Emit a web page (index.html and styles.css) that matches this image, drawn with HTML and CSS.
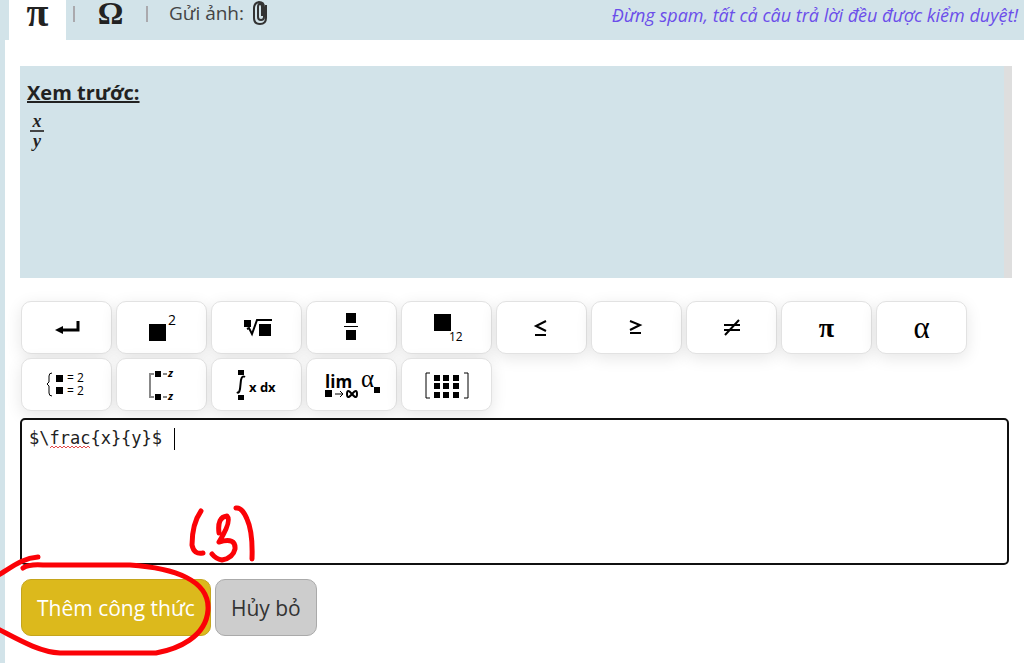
FILE: index.html
```html
<!DOCTYPE html>
<html lang="vi">
<head>
<meta charset="utf-8">
<title>Thêm công thức</title>
<link rel="stylesheet" href="styles.css">
</head>
<body>
<header class="topbar">
  <nav class="tabs">
    <button class="tab tab-active" type="button" aria-label="Công thức">π</button>
    <span class="divider"></span>
    <button class="tab" type="button" aria-label="Ký tự đặc biệt">Ω</button>
    <span class="divider"></span>
    <button class="attach" type="button">Gửi ảnh:
      <svg class="clip" viewBox="0 0 18 24" aria-hidden="true"><path d="M13 6v10q0 3-3 3t-3-3V6q0-3 2-3t2 3v9M15 4v13q0 6-6 6t-6-6V7q0-5 5-6 5 0 5 5"/></svg>
    </button>
  </nav>
  <p class="notice">Đừng spam, tất cả câu trả lời đều được kiểm duyệt!</p>
</header>
<main class="panel">
  <section class="preview">
    <h2 class="preview-title">Xem trước:</h2>
    <div class="fraction"><span class="numerator">x</span><span>y</span></div>
  </section>

  <div class="keys">
    <button class="key" type="button" aria-label="Xuống dòng"><svg viewBox="1 1 89 51"><path class="thick" d="M41 29H57V20"/><path d="M34 29l8-4v8z"/></svg></button>
    <button class="key" type="button" aria-label="Lũy thừa"><svg viewBox="1 1 89 51"><path d="M33 23h17v17H33z"/><text class="t14" x="52" y="24">2</text></svg></button>
    <button class="key" type="button" aria-label="Căn"><svg viewBox="1 1 89 51"><path d="M33 19h7v7h-7zM48 23h12v12H48z"/><path class="line" d="M36 28l2-1 3 6 5-14h15"/></svg></button>
    <button class="key" type="button" aria-label="Phân số"><svg viewBox="1 1 89 51"><path d="M40 12h10v10H40zM40 29h10v10H40zM38 25h14v1H38z"/></svg></button>
    <button class="key" type="button" aria-label="Chỉ số dưới"><svg viewBox="1 1 89 51"><path d="M33 13h17v17H33z"/><text class="t12" x="48" y="40">12</text></svg></button>
    <button class="key" type="button" aria-label="Nhỏ hơn hoặc bằng"><svg viewBox="1 1 89 51"><path class="line" d="M50 20l-10 5 10 5M39 34h11"/></svg></button>
    <button class="key" type="button" aria-label="Lớn hơn hoặc bằng"><svg viewBox="1 1 89 51"><path class="line" d="M39 20l10 4-10 5M39 32h11"/></svg></button>
    <button class="key" type="button" aria-label="Khác"><svg viewBox="1 1 89 51"><path class="line" d="M38 24h16M38 29h16M39 34l14-15"/></svg></button>
    <button class="key key-pi" type="button">π</button>
    <button class="key key-alpha" type="button">α</button>
    <button class="key" type="button" aria-label="Hệ phương trình"><svg viewBox="1 1 89 51"><path class="thin" d="M31 15q-3 0-3 3v6l-2 2 2 2v7q0 3 3 3"/><path d="M35 17h7v7h-7zM35 29h7v7h-7z"/><text class="t12" x="46" y="24">= 2</text><text class="t12" x="46" y="37">= 2</text></svg></button>
    <button class="key" type="button" aria-label="Hệ hoặc"><svg viewBox="1 1 89 51"><path class="gray" d="M38 16h-4v23h4"/><path d="M39 13h6v6h-6zM39 36h6v6h-6z"/><path class="gray" d="M47 16h4M47 39h4"/><text class="z" x="52" y="19">z</text><text class="z" x="52" y="42">z</text></svg></button>
    <button class="key" type="button" aria-label="Tích phân"><svg viewBox="1 1 89 51"><path d="M27 12h6v5h-6zM27 37h6v5h-6z"/><path class="integral" d="M34 19q-3-2-4 3l-1 9q-1 5-3 3"/><text class="bold12" x="38" y="34">x dx</text></svg></button>
    <button class="key" type="button" aria-label="Giới hạn"><svg viewBox="1 1 89 51"><text class="lim" x="19" y="30">lim</text><path d="M19 32h7v7h-7zM68 29h6v6h-6z"/><path class="thin" d="M29 36h8M34 33l3 3-3 3"/><path class="infinity" d="M46 36q-5-6-5 0t5 0q5-6 5 0t-5 0"/><text class="alpha" x="55" y="29">α</text></svg></button>
    <button class="key" type="button" aria-label="Ma trận"><svg viewBox="1 1 89 51"><path class="thin" d="M29 15h-4v25h4M63 15h4v25h-4"/><path d="M33 17h6v6h-6zM42 17h6v6h-6zM52 17h6v6h-6zM33 25h6v6h-6zM42 25h6v6h-6zM52 25h6v6h-6zM33 34h6v6h-6zM42 34h6v6h-6zM52 34h6v6h-6z"/></svg></button>
  </div>

  <div class="editor">
    <textarea class="source" aria-label="Mã công thức" spellcheck="false">$\frac{x}{y}$ </textarea>
    <svg class="spelling" viewBox="0 0 42 4" aria-hidden="true"><path d="M0 3l2-2 2 2 2-2 2 2 2-2 2 2 2-2 2 2 2-2 2 2 2-2 2 2 2-2 2 2 2-2 2 2 2-2 2 2 2-2 2 2"/></svg>
    <span class="caret"></span>
    <div class="actions">
      <button class="action action-add" type="button">Thêm công thức</button>
      <button class="action" type="button">Hủy bỏ</button>
    </div>
    <svg class="marks" viewBox="0 500 270 163" role="img" aria-label="(3)">
      <path d="M201 511C194 521 192 531 192 545Q194 555 203 553M219 533Q217 517 227 516Q232 521 219 542Q236 537 235 549Q233 558 222 560Q216 559 212 554M236 508Q242 507 247 519Q253 532 252 559"/>
      <path d="M38 557C22 558 12 567 -3 576M23 568Q29 564 43 565H130C174 568 210 580 208 610C206 637 178 649 156 653H60C38 652 14 637 -4 628"/>
    </svg>
  </div>
</main>
</body>
</html>
```
FILE: styles.css
```css
* { box-sizing: border-box; }
body {
  margin: 0;
  min-height: 100vh;
  display: flex;
  flex-direction: column;
  background: #d2e3e9;
  color: #222;
  font-family: "Open Sans", "Noto Sans", sans-serif;
  overflow-x: hidden;
}
button { font-family: inherit; color: inherit; padding: 0; cursor: pointer; }
.topbar {
  display: flex;
  justify-content: space-between;
  height: 40px;
  padding: 0 6px 0 9px;
}
.tabs { display: flex; align-items: flex-start; }
.tab {
  width: 57px;
  height: 40px;
  padding-bottom: 14px;
  border: 0;
  background: none;
  font: bold 32px/26px "Liberation Serif", serif;
}
.tab-active { background: #fff; font-size: 40px; }
.divider { width: 2px; height: 16px; margin: 6px 7px; background: #aaa9ad; }
.attach {
  display: flex;
  gap: 7px;
  margin-left: 14px;
  border: 0;
  background: none;
  color: #444;
  font-size: 19px;
  line-height: 26px;
}
.clip { width: 18px; height: 24px; margin-top: 1px; fill: none; stroke: #333; stroke-width: 2; }
.notice {
  margin: 0;
  color: #6b4eea;
  font-size: 18px;
  font-style: italic;
  line-height: 30px;
  white-space: nowrap;
}
.panel { flex: 1; margin-left: 5px; padding: 26px 12px 0 15px; background: #fff; }
.preview {
  height: 212px;
  padding: 12px 7px;
  border-right: 8px solid #dedede;
  background: #d2e3e9;
}
.preview-title {
  margin: 0;
  font-size: 20px;
  line-height: 30px;
  text-decoration: underline;
}
.fraction {
  display: inline-flex;
  flex-direction: column;
  align-items: center;
  width: 14px;
  margin: 4px 3px;
  font: italic bold 18px/18px "Liberation Serif", serif;
}
.numerator { width: 14px; height: 20px; border-bottom: 2px solid #444; text-align: center; }
.keys { display: flex; flex-wrap: wrap; gap: 4px; padding: 23px 0 7px 1px; }
.key {
  display: flex;
  align-items: center;
  justify-content: center;
  width: 91px;
  height: 53px;
  border: 1px solid #e2e2e2;
  border-radius: 10px;
  background: #fff;
  box-shadow: 0 4px 16px rgba(0, 0, 0, 0.1);
  color: #000;
}
.key svg { width: 89px; height: 51px; flex: none; }
.key-pi { font: bold 28px/28px "Liberation Serif", serif; }
.key-alpha { font: 31px/31px "Liberation Serif", serif; }
.line, .thick, .thin, .gray, .integral, .infinity { fill: none; stroke: #000; }
.line, .integral, .infinity { stroke-width: 2; }
.thick { stroke-width: 3; }
.gray { stroke: #888; stroke-width: 2; }
.t14 { font-size: 14px; }
.t12 { font-size: 12px; }
.z { font-size: 11px; font-weight: bold; font-style: italic; }
.bold12 { font-size: 13px; font-weight: bold; }
.lim { font-size: 17px; font-weight: bold; }
.alpha { font-family: "Liberation Serif", serif; font-size: 25px; }
.editor { position: relative; margin-right: 3px; }
.source {
  display: block;
  width: 100%;
  height: 147px;
  padding: 6px 7px;
  border: 2px solid #101010;
  border-radius: 5px;
  outline: 0;
  resize: none;
  background: #fff;
  color: #222;
  font: 17px/24px "DejaVu Sans Mono", monospace;
}
.spelling {
  position: absolute;
  left: 30px;
  top: 27px;
  width: 42px;
  height: 4px;
  fill: none;
  stroke: #e34b4b;
}
.caret { position: absolute; left: 154px; top: 10px; width: 1px; height: 22px; background: #000; }
.actions { display: flex; gap: 4px; padding: 14px 0 27px 1px; }
.action {
  height: 57px;
  padding: 0 15px;
  border: 1px solid #aaa;
  border-radius: 10px;
  background: #cdcdcd;
  color: #333;
  font-size: 21px;
}
.action-add { border-color: #c5a51c; background: #dcb91c; color: #fff; }
.marks {
  position: absolute;
  left: -20px;
  top: 82px;
  width: 270px;
  height: 163px;
  fill: none;
  stroke: #fb0207;
  stroke-width: 5;
  stroke-linecap: round;
  stroke-linejoin: round;
  pointer-events: none;
}
```
